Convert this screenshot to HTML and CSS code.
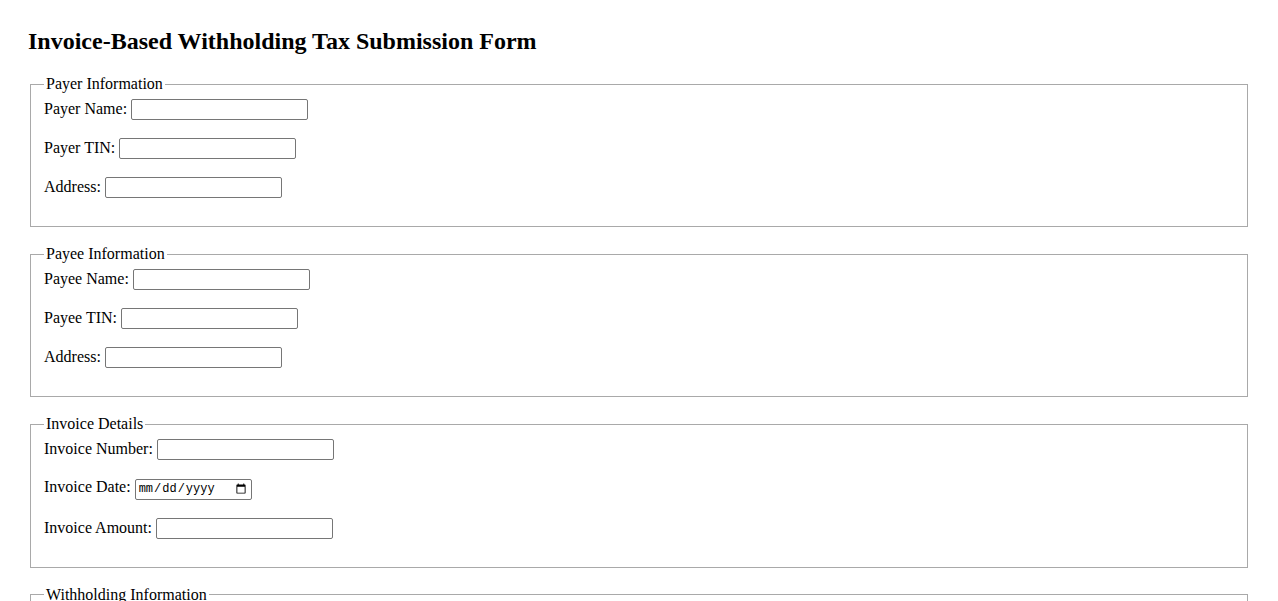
FILE: index.html
```html
<!DOCTYPE html>
<html lang="en">
<head>
<meta charset="utf-8">
<title>Invoice-Based Withholding Tax Submission Form</title>
<link rel="stylesheet" href="styles.css">
</head>
<body>
<div class="page">
  <h2 class="title">Invoice-Based Withholding Tax Submission Form</h2>
  <form class="form">
    <fieldset class="group">
      <legend class="group-legend">Payer Information</legend>
      <div class="row"><label>Payer Name: <input class="field" type="text"></label></div>
      <div class="row"><label>Payer TIN: <input class="field" type="text"></label></div>
      <div class="row"><label>Address: <input class="field" type="text"></label></div>
    </fieldset>
    <fieldset class="group">
      <legend class="group-legend">Payee Information</legend>
      <div class="row"><label>Payee Name: <input class="field" type="text"></label></div>
      <div class="row"><label>Payee TIN: <input class="field" type="text"></label></div>
      <div class="row"><label>Address: <input class="field" type="text"></label></div>
    </fieldset>
    <fieldset class="group">
      <legend class="group-legend">Invoice Details</legend>
      <div class="row"><label>Invoice Number: <input class="field" type="text"></label></div>
      <div class="row"><label>Invoice Date: <input class="field date" type="date"></label></div>
      <div class="row"><label>Invoice Amount: <input class="field" type="text"></label></div>
    </fieldset>
    <fieldset class="group">
      <legend class="group-legend">Withholding Information</legend>
      <div class="row"><label>Withholding Tax Rate (%): <input class="field" type="text"></label></div>
      <div class="row"><label>Withholding Tax Amount: <input class="field" type="text"></label></div>
    </fieldset>
    <button class="submit" type="submit">Submit</button>
  </form>
</div>
</body>
</html>
```

FILE: styles.css
```css
html, body {
  margin: 0;
  padding: 0;
  background: #ffffff;
}
body {
  font-family: "Liberation Serif", "Times New Roman", serif;
  font-size: 16px;
  color: #000000;
}
.page {
  padding: 28px 28px 20px 28px;
}
.title {
  font-size: 24px;
  font-weight: bold;
  margin: 0 0 20px 0;
}
.group {
  margin: 0 2px 18px 2px;
  padding: 0 12px 10px 13px;
  border: 1px solid #a9a9a9;
}
.group-legend {
  padding: 0 2px 0 2px;
}
.row {
  margin: 0 0 18px 0;
}
.group-legend + .row {
  margin-top: 6px;
}
.field {
  box-sizing: border-box;
  width: 177px;
  height: 21px;
  border: 1px solid #767676;
  border-radius: 2px;
  padding: 1px 2px;
  font-family: "Liberation Sans", Arial, sans-serif;
  font-size: 13.33px;
  vertical-align: baseline;
}
.date {
  width: 117px;
  font-family: "Liberation Mono", "DejaVu Sans Mono", monospace;
  font-size: 12px;
}
.submit {
  font-family: "Liberation Sans", Arial, sans-serif;
  font-size: 13.33px;
}
```
